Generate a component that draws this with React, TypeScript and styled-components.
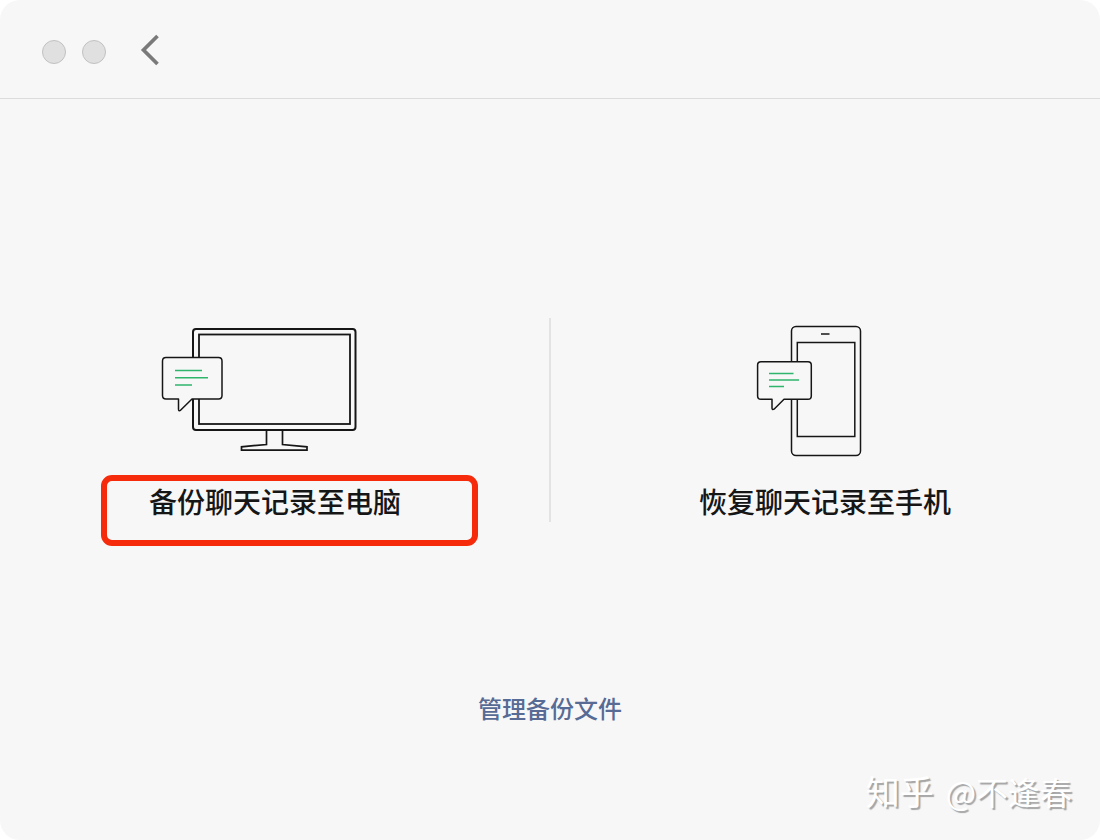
import React from "react";
import styled, { createGlobalStyle } from "styled-components";

const GlobalStyle = createGlobalStyle`
  *, *::before, *::after { box-sizing: border-box; }
  body {
    margin: 0;
    background: #ffffff;
    font-family: "Noto Sans CJK SC", sans-serif;
    color: #161616;
  }
`;

const Window = styled.div`
  position: relative;
  display: flex;
  flex-direction: column;
  min-height: 100vh;
  background: #f7f7f7;
  border-radius: 20px;
  overflow: hidden;
`;

const TitleBar = styled.header`
  display: flex;
  align-items: center;
  height: 99px;
  padding: 6px 42px 0;
  border-bottom: 1px solid #dcdcdc;
`;

const WindowControls = styled.div`
  display: flex;
  gap: 16px;
`;

const ControlDot = styled.button`
  width: 24px;
  height: 24px;
  padding: 0;
  border: 1px solid #c2c2c2;
  border-radius: 50%;
  background: #e0e0e0;
`;

const BackButton = styled.button`
  display: flex;
  margin-left: 32px;
  padding: 0 0 4px;
  border: 0;
  background: none;
`;

const Main = styled.main`
  display: flex;
  flex: 1;
  flex-direction: column;
  align-items: center;
  padding-top: 211px;
`;

const Choices = styled.div`
  display: flex;
  width: 100%;
`;

const Divider = styled.div`
  width: 2px;
  height: 204px;
  margin: 8px -1px 0;
  background: #e3e3e3;
`;

const Choice = styled.button`
  display: flex;
  flex: 1;
  flex-direction: column;
  align-items: center;
  gap: 10px;
  padding: 0;
  border: 0;
  background: none;
  color: inherit;
  font: inherit;
`;

const ChoiceLabel = styled.span`
  position: relative;
  font-size: 28px;
  font-weight: 500;
  line-height: 42px;
  white-space: nowrap;
`;

const Highlight = styled.span`
  position: absolute;
  top: -5px;
  right: -77px;
  bottom: -24px;
  left: -48px;
  border: 6px solid #f52b0b;
  border-radius: 11px;
`;

const ManageLink = styled.a`
  margin-top: 168px;
  color: #576b95;
  font-size: 24px;
  font-weight: 500;
  line-height: 36px;
  text-decoration: none;
`;

const Watermark = styled.div`
  position: absolute;
  right: 28px;
  bottom: 27px;
  display: flex;
  align-items: baseline;
  gap: 12px;
  color: #ffffff;
  font-size: 32px;
  line-height: 44px;
  text-shadow: 2px 2px 1px #a4a4a4;
`;

const WatermarkBrand = styled.span`
  font-size: 34px;
`;

const ChatBubble = ({ d, lines }: { d: string; lines: string }) => (
  <>
    <path d={d} fill="#f7f7f7" strokeWidth="1.5" />
    <path d={lines} stroke="#2fb56c" strokeWidth="1.5" />
  </>
);

const ComputerIcon = () => (
  <svg width="240" height="160" viewBox="0 0 240 160" fill="none" stroke="#161616" strokeLinejoin="round" aria-hidden="true">
    <rect x="38" y="19" width="162.500" height="101" rx="3" strokeWidth="2" />
    <rect x="44" y="24.500" width="151" height="89.500" strokeWidth="1.800" strokeLinejoin="miter" />
    <path d="M111.500 120V134.500L86.500 136.800V140.200H152V136.800L127.500 134.500V120" strokeWidth="1.700" strokeLinejoin="miter" />
    <ChatBubble
      d="M11 47.500H63.500Q67 47.500 67 51V85.500Q67 89 63.500 89H37L25.500 100.300Q23.500 101.500 23.500 99V89H11Q7.500 89 7.500 85.500V51Q7.500 47.500 11 47.500Z"
      lines="M20 60.500H47M20 67.700H53M20 75H37"
    />
  </svg>
);

const PhoneIcon = () => (
  <svg width="240" height="160" viewBox="0 0 240 160" fill="none" stroke="#161616" strokeLinejoin="round" aria-hidden="true">
    <rect x="86.500" y="16.500" width="69" height="129" rx="4.500" strokeWidth="1.500" />
    <rect x="92.300" y="32.500" width="57.500" height="94" strokeWidth="1.500" strokeLinejoin="miter" />
    <path d="M116 24H124.500" strokeWidth="1.500" />
    <ChatBubble
      d="M56 51.700H103Q106.300 51.700 106.300 55V86Q106.300 89.300 103 89.300H79L69 99.200Q67 100.300 67 98V89.300H56Q52.600 89.300 52.600 86V55Q52.600 51.700 56 51.700Z"
      lines="M64 63.500H88.500M64 70H94M64 76.500H79"
    />
  </svg>
);

export default function App() {
  return (
    <>
      <GlobalStyle />
      <Window>
        <TitleBar>
          <WindowControls>
            <ControlDot type="button" aria-label="关闭" />
            <ControlDot type="button" aria-label="最小化" />
          </WindowControls>
          <BackButton type="button" aria-label="返回">
            <svg width="26" height="34" viewBox="0 0 26 34" fill="none" stroke="#7a7a7a" strokeWidth="3.700" aria-hidden="true">
              <path d="M19.500 3L5.500 17L19.500 31" />
            </svg>
          </BackButton>
        </TitleBar>
        <Main>
          <Choices>
            <Choice type="button">
              <ComputerIcon />
              <ChoiceLabel>
                备份聊天记录至电脑
                <Highlight />
              </ChoiceLabel>
            </Choice>
            <Divider />
            <Choice type="button">
              <PhoneIcon />
              <ChoiceLabel>恢复聊天记录至手机</ChoiceLabel>
            </Choice>
          </Choices>
          <ManageLink href="#backups">管理备份文件</ManageLink>
        </Main>
        <Watermark>
          <WatermarkBrand>知乎</WatermarkBrand>
          <span>@不逢春</span>
        </Watermark>
      </Window>
    </>
  );
}
